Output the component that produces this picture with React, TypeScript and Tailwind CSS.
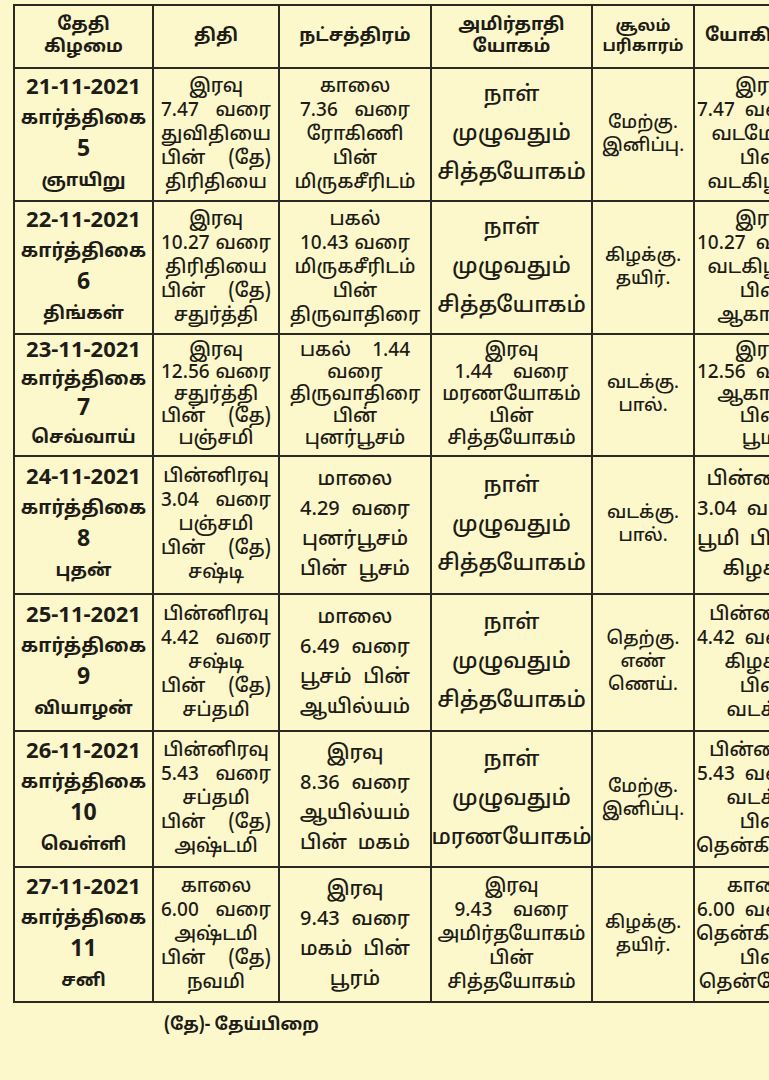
const TAMIL = "font-['Noto_Sans_Tamil','Noto_Sans','Lohit_Tamil',sans-serif]";

interface Row {
  date: string;
  month: string;
  day: string;
  weekday: string;
  thithi: string[];
  star: string[];
  yogam: string[];
  soolam: string[];
  yogini: string[];
  h: string;
  tight?: boolean;
}

const rows: Row[] = [
  {
    date: "21-11-2021",
    month: "கார்த்திகை",
    day: "5",
    weekday: "ஞாயிறு",
    thithi: ["இரவு", "7.47 வரை", "துவிதியை", "பின் (தே)", "திரிதியை"],
    star: ["காலை", "7.36 வரை", "ரோகிணி", "பின்", "மிருகசீரிடம்"],
    yogam: ["நாள்", "முழுவதும்", "சித்தயோகம்"],
    soolam: ["மேற்கு.", "இனிப்பு."],
    yogini: ["இரவு", "7.47 வரை", "வடமேற்கு", "பின்", "வடகிழக்கு"],
    h: "h-[133px]",
  },
  {
    date: "22-11-2021",
    month: "கார்த்திகை",
    day: "6",
    weekday: "திங்கள்",
    thithi: ["இரவு", "10.27 வரை", "திரிதியை", "பின் (தே)", "சதுர்த்தி"],
    star: ["பகல்", "10.43 வரை", "மிருகசீரிடம்", "பின்", "திருவாதிரை"],
    yogam: ["நாள்", "முழுவதும்", "சித்தயோகம்"],
    soolam: ["கிழக்கு.", "தயிர்."],
    yogini: ["இரவு", "10.27 வரை", "வடகிழக்கு", "பின்", "ஆகாயம்"],
    h: "h-[133px]",
  },
  {
    date: "23-11-2021",
    month: "கார்த்திகை",
    day: "7",
    weekday: "செவ்வாய்",
    thithi: ["இரவு", "12.56 வரை", "சதுர்த்தி", "பின் (தே)", "பஞ்சமி"],
    star: ["பகல் 1.44", "வரை", "திருவாதிரை", "பின்", "புனர்பூசம்"],
    yogam: ["இரவு", "1.44 வரை", "மரணயோகம்", "பின்", "சித்தயோகம்"],
    soolam: ["வடக்கு.", "பால்."],
    yogini: ["இரவு", "12.56 வரை", "ஆகாயம்", "பின்", "பூமி"],
    h: "h-[122px]",
    tight: true,
  },
  {
    date: "24-11-2021",
    month: "கார்த்திகை",
    day: "8",
    weekday: "புதன்",
    thithi: ["பின்னிரவு", "3.04 வரை", "பஞ்சமி", "பின் (தே)", "சஷ்டி"],
    star: ["மாலை", "4.29 வரை", "புனர்பூசம்", "பின் பூசம்"],
    yogam: ["நாள்", "முழுவதும்", "சித்தயோகம்"],
    soolam: ["வடக்கு.", "பால்."],
    yogini: ["பின்னிரவு", "3.04 வரை", "பூமி பின்", "கிழக்கு"],
    h: "h-[138px]",
  },
  {
    date: "25-11-2021",
    month: "கார்த்திகை",
    day: "9",
    weekday: "வியாழன்",
    thithi: ["பின்னிரவு", "4.42 வரை", "சஷ்டி", "பின் (தே)", "சப்தமி"],
    star: ["மாலை", "6.49 வரை", "பூசம் பின்", "ஆயில்யம்"],
    yogam: ["நாள்", "முழுவதும்", "சித்தயோகம்"],
    soolam: ["தெற்கு.", "எண்", "ணெய்."],
    yogini: ["பின்னிரவு", "4.42 வரை", "கிழக்கு", "பின்", "வடக்கு"],
    h: "h-[137px]",
  },
  {
    date: "26-11-2021",
    month: "கார்த்திகை",
    day: "10",
    weekday: "வெள்ளி",
    thithi: ["பின்னிரவு", "5.43 வரை", "சப்தமி", "பின் (தே)", "அஷ்டமி"],
    star: ["இரவு", "8.36 வரை", "ஆயில்யம்", "பின் மகம்"],
    yogam: ["நாள்", "முழுவதும்", "மரணயோகம்"],
    soolam: ["மேற்கு.", "இனிப்பு."],
    yogini: ["பின்னிரவு", "5.43 வரை", "வடக்கு", "பின்", "தென்கிழக்கு"],
    h: "h-[136px]",
  },
  {
    date: "27-11-2021",
    month: "கார்த்திகை",
    day: "11",
    weekday: "சனி",
    thithi: ["காலை", "6.00 வரை", "அஷ்டமி", "பின் (தே)", "நவமி"],
    star: ["இரவு", "9.43 வரை", "மகம் பின்", "பூரம்"],
    yogam: ["இரவு", "9.43 வரை", "அமிர்தயோகம்", "பின்", "சித்தயோகம்"],
    soolam: ["கிழக்கு.", "தயிர்."],
    yogini: ["காலை", "6.00 வரை", "தென்கிழக்கு", "பின்", "தென்மேற்கு"],
    h: "h-[135px]",
  },
];

// lines with a space are spread to the box width, like justified print text
function Lines({
  lines,
  box,
  big,
  tight,
  spread = true,
}: {
  lines: string[];
  box: string;
  big?: boolean;
  tight?: boolean;
  spread?: boolean;
}) {
  let cls = "text-[19px] leading-[22px]";
  if (big) cls = "text-[22px] leading-[39px]";
  else if (lines.length === 4) cls = "text-[20px] leading-[30px]";
  else if (lines.length === 5)
    cls = tight ? "text-[19px] leading-[22px]" : "text-[19px] leading-[24px]";
  return (
    <div className={`flex flex-col ${big ? "mx-auto w-full" : box} ${cls}`}>
      {lines.map((l, i) =>
        l.includes(" ") && !big ? (
          <span
            key={i}
            className={`flex whitespace-nowrap ${
              spread ? "self-stretch justify-between" : "self-start gap-[10px]"
            }`}
          >
            {l.split(" ").map((w, j) => (
              <span key={j}>{w}</span>
            ))}
          </span>
        ) : (
          <span key={i} className="self-center whitespace-nowrap">
            {l}
          </span>
        ),
      )}
    </div>
  );
}

const cell = "border-2 border-[#2b2a22] text-center align-middle p-0";

export default function App() {
  return (
    <div
      className={`w-[769px] h-[1080px] overflow-hidden bg-[#fcf8cb] text-[#1d1c16] ${TAMIL}`}
    >
      <div className="pt-[4px] pl-[13px]">
        <table className="table-fixed border-collapse w-[816px] font-medium">
          <colgroup>
            <col className="w-[139px]" />
            <col className="w-[126px]" />
            <col className="w-[152px]" />
            <col className="w-[161px]" />
            <col className="w-[102px]" />
            <col className="w-[136px]" />
          </colgroup>
          <thead>
            <tr className="h-[63px] font-bold text-[18px] leading-[22px]">
              <th className={cell}>
                தேதி
                <br />
                கிழமை
              </th>
              <th className={cell}>திதி</th>
              <th className={cell}>நட்சத்திரம்</th>
              <th className={cell}>
                அமிர்தாதி
                <br />
                யோகம்
              </th>
              <th className={`${cell} text-[16px] leading-[20px]`}>
                சூலம்
                <br />
                பரிகாரம்
              </th>
              <th className={`${cell} text-left pl-[10px]`}>யோகினி</th>
            </tr>
          </thead>
          <tbody>
            {rows.map((r) => (
              <tr key={r.date} className={r.h}>
                <td className={cell}>
                  <div
                    className={`flex flex-col items-center font-bold ${
                      r.tight ? "leading-[29px]" : "leading-[31px]"
                    }`}
                  >
                    <span className="text-[22px]">{r.date}</span>
                    <span className="text-[19px]">{r.month}</span>
                    <span className="text-[23px]">{r.day}</span>
                    <span className="text-[18px]">{r.weekday}</span>
                  </div>
                </td>
                <td className={cell}>
                  <Lines
                    lines={r.thithi}
                    box="mx-auto w-[110px]"
                    tight={r.tight}
                  />
                </td>
                <td className={cell}>
                  <Lines
                    lines={r.star}
                    box="mx-auto w-[110px]"
                    tight={r.tight}
                  />
                </td>
                <td className={cell}>
                  <Lines
                    lines={r.yogam}
                    box="mx-auto w-[114px]"
                    big={r.yogam.length === 3}
                    tight={r.tight}
                  />
                </td>
                <td className={cell}>
                  <div className="flex flex-col items-center text-[18px] leading-[23px]">
                    {r.soolam.map((s, i) => (
                      <span key={i}>{s}</span>
                    ))}
                  </div>
                </td>
                <td className={cell}>
                  <Lines
                    lines={r.yogini}
                    box="pl-[2px] w-[132px]"
                    tight={r.tight}
                    spread={false}
                  />
                </td>
              </tr>
            ))}
          </tbody>
        </table>
        <div className="pl-[151px] pt-[10px] font-bold text-[17px]">
          (தே)- தேய்பிறை
        </div>
      </div>
    </div>
  );
}
